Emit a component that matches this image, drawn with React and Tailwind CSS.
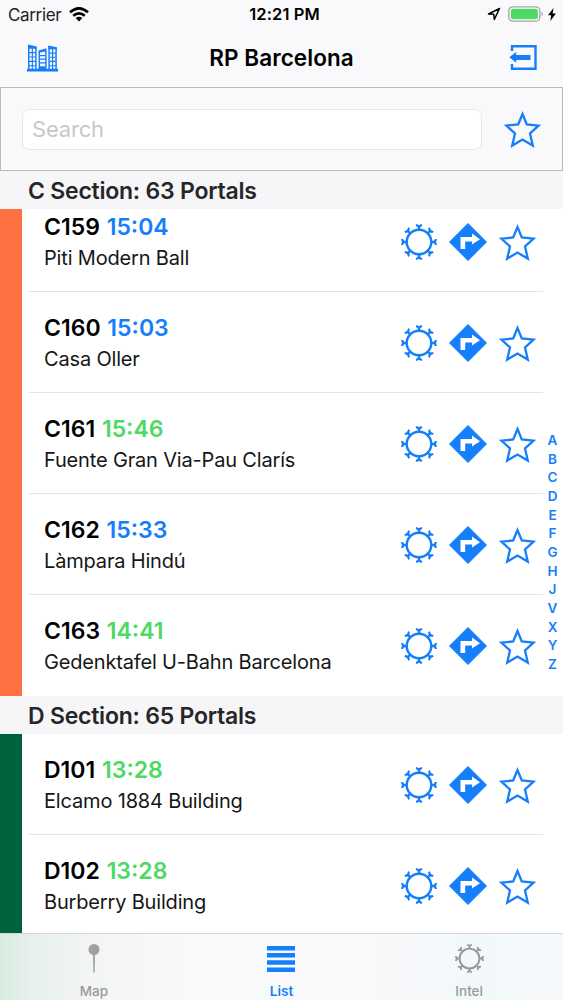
import { useState } from 'react';
import clsx from 'clsx';

const sections = [
  {
    title: 'C Section: 63 Portals',
    bar: 'bg-[#ff7043]',
    // the list is scrolled, so the first row sits partly under its header
    offset: '-mt-[18px]',
    portals: [
      { code: 'C159', time: '15:04', name: 'Piti Modern Ball', color: 'text-[#147efb]' },
      { code: 'C160', time: '15:03', name: 'Casa Oller', color: 'text-[#147efb]' },
      { code: 'C161', time: '15:46', name: 'Fuente Gran Via-Pau Clarís', color: 'text-[#4cd964]' },
      { code: 'C162', time: '15:33', name: 'Làmpara Hindú', color: 'text-[#147efb]' },
      { code: 'C163', time: '14:41', name: 'Gedenktafel U-Bahn Barcelona', color: 'text-[#4cd964]' },
    ],
  },
  {
    title: 'D Section: 65 Portals',
    bar: 'bg-[#00613d]',
    offset: '',
    portals: [
      { code: 'D101', time: '13:28', name: 'Elcamo 1884 Building', color: 'text-[#4cd964]' },
      { code: 'D102', time: '13:28', name: 'Burberry Building', color: 'text-[#4cd964]' },
    ],
  },
];

const indexLetters = ['A', 'B', 'C', 'D', 'E', 'F', 'G', 'H', 'J', 'V', 'X', 'Y', 'Z'];

function StarIcon() {
  return (
    <svg viewBox="0 0 37 37" className="size-[37px]" fill="none" stroke="currentColor" strokeWidth="2.3">
      <path d="M18.5 3 L22.8 13.5 L34.6 14.6 L26 22.5 L28.8 34.6 L18.5 28.6 L8.2 34.6 L11 22.5 L2.4 14.6 L14.2 13.5 Z" />
    </svg>
  );
}

function PortalIcon({ className }) {
  return (
    <svg viewBox="0 0 36 36" className={className} fill="currentColor">
      <circle cx="18" cy="18" r="12.3" fill="none" stroke="currentColor" strokeWidth="2.4" />
      {[0, 45, 90, 135, 180, 225, 270, 315].map((angle) => (
        <path key={angle} transform={`rotate(${angle} 18 18)`} d="M14.9 0L18 .9L21.1 0V2L19.2 3.2V6H16.8V3.2L14.9 2Z" />
      ))}
    </svg>
  );
}

function DirectionsIcon() {
  return (
    <svg viewBox="0 0 38 38" className="size-[38px]">
      <path d="M19 0.5L37.5 19L19 37.5L.5 19Z" fill="currentColor" stroke="currentColor" strokeLinejoin="round" />
      <path d="M11.5 26V14H23V10.5L31 16.2L23 21.5V18.5H16.2V26Z" fill="#fff" />
    </svg>
  );
}

function BuildingsIcon() {
  return (
    <svg viewBox="0 0 32 28" className="h-7 w-[31px]" fill="none" stroke="currentColor" strokeWidth="1.2">
      <path d="M1 0L10 2V4.5H1ZM12 6.2L20 4V7L12 8.5ZM22 1L31 3V5H22Z" fill="currentColor" stroke="none" />
      <path d="M1.8 2V26M9.2 3V26M12.7 7V26M19.5 6V26M22.8 2V26M30 4V26" strokeWidth="1.5" />
      <path d="M5.5 3V26M26.4 4V26M2 8.5H9M2 13H9M2 17.5H9M2 22H9M13 11.5H19M13 15.2H19M13 19H19M23 9H30M23 13.2H30M23 17.5H30M23 22H30" />
      <path d="M0 25H32V28H0ZM13 22.5H19V26H13Z" fill="currentColor" stroke="none" />
    </svg>
  );
}

function LogoutIcon() {
  return (
    <svg viewBox="0 0 28 27" className="h-[27px] w-7">
      <path d="M3 7V2.2H26.5V24.8H3V20" fill="none" stroke="currentColor" strokeWidth="2.4" />
      <path d="M.3 13.3L7.2 8V11H21.5V16H7.2V18.8Z" fill="currentColor" />
    </svg>
  );
}

function StatusBar() {
  return (
    <div className="grid h-7 grid-cols-[1fr_90px_1fr] items-center text-black">
      <div className="flex items-center pl-2">
        <span className="pt-[3px] text-[17px] tracking-[-0.35px] text-[#222]">Carrier</span>
        <svg viewBox="0 0 20 15" className="ml-2 h-[15px] w-5" fill="none" stroke="currentColor" strokeWidth="2.6">
          <path d="M1 5.3Q10 -2.6 19 5.3M4.2 8.8Q10 3.8 15.8 8.8" />
          <path d="M6.6 11Q10 8.3 13.4 11L10 14.5Z" fill="currentColor" stroke="none" />
        </svg>
      </div>
      <span className="pl-[6px] text-center text-[16.5px] font-semibold tracking-[0.1px] whitespace-nowrap">12:21 PM</span>
      <div className="flex items-center justify-end pr-[7px]">
        <svg viewBox="0 0 14 14" className="mr-[7px] size-[14px]" fill="none" stroke="currentColor" strokeWidth="1.5">
          <path d="M1.5 7L12.5 1.5L7.3 12.5L6.8 7.3Z" strokeLinejoin="round" />
        </svg>
        <svg viewBox="0 0 36 16" className="h-4 w-9">
          <rect x=".8" y=".8" width="31" height="14.4" rx="4" fill="#fff" stroke="#a3a3a3" strokeWidth="1.3" />
          <rect x="2.8" y="2.8" width="27" height="10.4" rx="2" fill="#4cd964" />
          <path d="M33.5 5.5Q36 8 33.5 10.5Z" fill="#a3a3a3" />
        </svg>
        <svg viewBox="0 0 8 13" className="ml-1 h-[13px] w-2" fill="currentColor">
          <path d="M5.5 0L0 7.3H3.2L2.3 13L8 5.4H4.7Z" />
        </svg>
      </div>
    </div>
  );
}

function PortalRow({ portal, last }) {
  return (
    <li className="flex h-[101px] shrink-0 pl-[7px]">
      <div
        className={clsx(
          'mr-5 flex flex-1 items-center border-b pt-[2px] pr-[7px] pl-[15px]',
          last ? 'border-transparent' : 'border-[#e3e3e5]'
        )}
      >
        <div className="flex-1 pt-[2px] whitespace-nowrap">
          <p className="text-[23px]/[31px] font-semibold [word-spacing:1px] text-black">
            {portal.code} <span className={portal.color}>{portal.time}</span>
          </p>
          <p className="text-[20px]/[31px] tracking-[-0.17px] text-[#161616]">{portal.name}</p>
        </div>
        <div className="flex items-center gap-3 text-[#147efb]">
          <PortalIcon className="size-9" />
          <DirectionsIcon />
          <StarIcon />
        </div>
      </div>
    </li>
  );
}

export default function App() {
  const [query, setQuery] = useState('');

  return (
    <div className="relative flex h-[1000px] w-[563px] flex-col overflow-hidden bg-white font-['Inter',sans-serif]">
      <header className="h-[87px] shrink-0 bg-[#f9f8fb]">
        <StatusBar />
        <div className="flex h-[59px] items-center justify-between pr-[26px] pl-[27px] text-[#147efb]">
          <BuildingsIcon />
          <h1 className="mr-1 text-[22.5px] font-semibold tracking-[0.05px] text-black">RP Barcelona</h1>
          <LogoutIcon />
        </div>
      </header>

      <div className="flex h-[84px] shrink-0 items-center justify-between border border-[#b9b8bb] bg-[#f9f8fb] pr-[21px] pl-[21px] text-[#147efb]">
        <input
          type="text"
          placeholder="Search"
          value={query}
          onChange={(e) => setQuery(e.target.value)}
          className="h-[41px] w-[460px] rounded-[7px] border border-[#e7e6e9] bg-white px-[9px] text-[22px] tracking-[-0.2px] text-black placeholder:text-[#c7c7cc]"
        />
        <StarIcon />
      </div>

      <main className="min-h-0 flex-1 overflow-hidden">
        {sections.map((section) => (
          <section key={section.title}>
            <h2 className="relative z-10 flex h-[38px] items-center bg-[#f6f5f7] pt-[3px] pl-7 text-[23px] font-semibold tracking-[-0.23px] text-[#262628]">
              {section.title}
            </h2>
            <div className={clsx('flex', section.offset)}>
              <div className={clsx('w-[22px] shrink-0', section.bar)} />
              <ul className="flex-1">
                {section.portals.map((portal, i) => (
                  <PortalRow key={portal.code} portal={portal} last={i === section.portals.length - 1} />
                ))}
              </ul>
            </div>
          </section>
        ))}
      </main>

      {/* Section index */}
      <nav className="absolute top-[431px] right-0 z-20 flex w-[21px] flex-col text-center text-[13.5px]/[18.67px] font-semibold text-[#147efb]">
        {indexLetters.map((letter) => (
          <span key={letter}>{letter}</span>
        ))}
      </nav>

      <footer className="grid h-[67px] shrink-0 grid-cols-3 border-t border-[#d5d4d8] bg-[linear-gradient(90deg,#d8ebdf_0px,#e7f0ec_32px,#f3f5f5_90px,#f8f9fa_180px,#f9f9fb_380px,#f2f8fa_470px,#f6f9fb_563px)] text-[13.5px] font-medium text-[#98989b]">
        <div className="flex flex-col items-center pt-[9px]">
          <svg viewBox="0 0 12 30" className="h-[30px] w-3">
            <circle cx="6" cy="6.5" r="5.5" fill="#a0a0a2" />
            <path d="M5 11H7L6.7 29.5H5.3Z" fill="#a0a0a2" />
          </svg>
          <span className="mt-2">Map</span>
        </div>
        <div className="flex flex-col items-center pt-[9px] text-[#147efb]">
          <svg viewBox="0 0 28 30" className="h-[30px] w-7" fill="currentColor">
            <path d="M0 3H28V7.5H0ZM0 10H28V14.5H0ZM0 17.3H28V21.8H0ZM0 24.5H28V29H0Z" />
          </svg>
          <span className="mt-2 font-semibold">List</span>
        </div>
        <div className="flex flex-col items-center pt-[10px]">
          <PortalIcon className="size-[29px]" />
          <span className="mt-2">Intel</span>
        </div>
      </footer>
    </div>
  );
}
